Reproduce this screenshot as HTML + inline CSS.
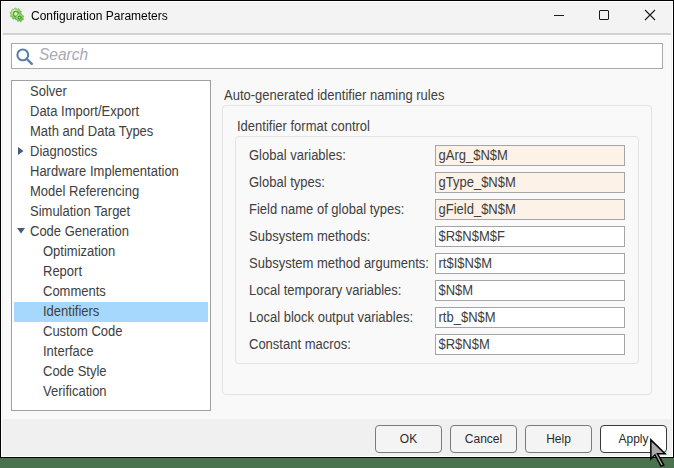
<!DOCTYPE html>
<html><head><meta charset="utf-8">
<style>
*{margin:0;padding:0;box-sizing:border-box}
html,body{width:674px;height:468px;overflow:hidden;background:#48734e}
body{position:relative;font-family:"Liberation Sans",sans-serif;font-size:13px;color:#262626}
.a{position:absolute}
#win{left:0;top:0;width:674px;height:458px;background:#000}
#frame{left:1px;top:1px;width:672px;height:456px;background:#fff}
#title{left:2px;top:2px;width:670px;height:31px;background:#f3f3f3}
#sep{left:2px;top:33px;width:670px;height:2px;background:#f0f0f0}
#sepl{left:3px;top:33px;width:668px;height:2px;background:#d2d2d2}
#content{left:2px;top:35px;width:670px;height:384px;background:#f0f0f0}
#cin{left:3px;top:35px;width:668px;height:384px;background:#f9f9f9}
#bar{left:2px;top:419px;width:670px;height:37px;background:#f0f0f0}
.ttl{left:31px;top:8px;font-size:12px;color:#000;will-change:transform;line-height:16px;white-space:nowrap}
#search{left:11px;top:43px;width:652px;height:26px;background:#fff;border:1px solid #a9a9a9}
.ph{left:39px;top:44px;font-size:15.5px;font-style:italic;color:#aaaab2;line-height:22px;transform:scaleY(1.1);transform-origin:0 16.4px}
#tree{left:11px;top:80px;width:200px;height:331px;background:#fff;border:1px solid #a0a0a0}
.row{position:absolute;left:3px;height:20px;line-height:20px;white-space:nowrap;transform:scaleY(1.075);transform-origin:0 14.5px;color:#404040}
.sel{left:14px;top:302px;width:194px;height:20px;background:#a6d8fd}
.grp1{left:222px;top:105px;width:430px;height:290px;border:1px solid #e3e3e3;border-radius:4px}
.grp2{left:235px;top:136px;width:404px;height:228px;border:1px solid #e3e3e3;border-radius:4px}
.lbl{position:absolute;left:249px;white-space:nowrap;line-height:20px;margin-top:1px;transform:scaleY(1.075);transform-origin:0 14.5px;color:#404040}
.fld{position:absolute;left:435px;width:190px;height:21px;border:1px solid #a5a5a5;background:#fff;padding-left:2.5px;line-height:19px;white-space:nowrap}
.fld.h{background:#fcf2e8}
.ft{display:inline-block;transform:scaleY(1.075);transform-origin:0 14px;color:#404040}
.btn{position:absolute;top:425px;width:67px;height:28px;border:1px solid #7a7a7a;border-radius:4px;background:#f4f4f4;text-align:center;line-height:26px;color:#2a2a2a;font-size:12px}
</style></head><body>
<div id="win" class="a"></div>
<div id="frame" class="a"></div>
<div id="title" class="a"></div>
<div id="sep" class="a"></div>
<div id="sepl" class="a"></div>
<div id="content" class="a"></div>
<div id="cin" class="a"></div>
<div id="bar" class="a"></div>

<!-- icon -->
<svg class="a" style="left:8px;top:6px" width="18" height="18" viewBox="0 0 18 18">
  <defs><radialGradient id="g1" cx="0.35" cy="0.3" r="0.75"><stop offset="0" stop-color="#d8f2bf"/><stop offset="0.5" stop-color="#9ad672"/><stop offset="1" stop-color="#5fae3e"/></radialGradient>
  <radialGradient id="g2" cx="0.4" cy="0.35" r="0.7"><stop offset="0" stop-color="#c4eaa4"/><stop offset="0.6" stop-color="#8ed064"/><stop offset="1" stop-color="#5aa83a"/></radialGradient></defs>
  <path d="M12.90 7.90 L13.77 8.46 L13.51 9.72 L12.49 9.89 L11.95 10.84 L12.33 11.80 L11.37 12.67 L10.45 12.20 L9.45 12.66 L9.19 13.66 L7.90 13.80 L7.43 12.88 L6.35 12.66 L5.56 13.31 L4.43 12.67 L4.59 11.65 L3.85 10.84 L2.82 10.90 L2.29 9.72 L3.02 8.99 L2.90 7.90 L2.03 7.34 L2.29 6.08 L3.31 5.91 L3.85 4.96 L3.47 4.00 L4.43 3.13 L5.35 3.60 L6.35 3.14 L6.61 2.14 L7.90 2.00 L8.37 2.92 L9.45 3.14 L10.24 2.49 L11.37 3.13 L11.21 4.15 L11.95 4.96 L12.98 4.90 L13.51 6.08 L12.78 6.81Z" fill="url(#g1)" stroke="#62ad42" stroke-width="0.5"/>
  <circle cx="7.9" cy="7.9" r="2.5" fill="none" stroke="#52a034" stroke-width="1.2"/>
  <circle cx="7.9" cy="7.9" r="1.5" fill="#e6f5da"/>
  <path d="M15.03 12.30 L15.59 12.91 L15.08 13.95 L14.25 13.88 L13.53 14.52 L13.49 15.35 L12.40 15.72 L11.86 15.09 L10.90 15.03 L10.29 15.59 L9.25 15.08 L9.32 14.25 L8.68 13.53 L7.85 13.49 L7.48 12.40 L8.11 11.86 L8.17 10.90 L7.61 10.29 L8.12 9.25 L8.95 9.32 L9.67 8.68 L9.71 7.85 L10.80 7.48 L11.34 8.11 L12.30 8.17 L12.91 7.61 L13.95 8.12 L13.88 8.95 L14.52 9.67 L15.35 9.71 L15.72 10.80 L15.09 11.34Z" fill="url(#g2)" stroke="#56a438" stroke-width="0.5"/>
  <circle cx="11.6" cy="11.6" r="1.5" fill="none" stroke="#46922c" stroke-width="1.1"/>
</svg>
<div class="a ttl">Configuration Parameters</div>

<!-- window controls -->
<div class="a" style="left:554px;top:15px;width:10px;height:1px;background:#1a1a1a"></div>
<div class="a" style="left:599px;top:10px;width:10px;height:10px;border:1px solid #1a1a1a;border-radius:1px"></div>
<svg class="a" style="left:644px;top:9px" width="12" height="12" viewBox="0 0 12 12"><path d="M1 1L11 11M11 1L1 11" stroke="#1a1a1a" stroke-width="1.1"/></svg>

<!-- search -->
<div id="search" class="a"></div>
<svg class="a" style="left:14px;top:46px" width="22" height="22" viewBox="0 0 22 22">
  <circle cx="8.8" cy="8.9" r="5.4" fill="none" stroke="#5b7fa9" stroke-width="2.1"/>
  <path d="M12.8 13L17.8 17.9" stroke="#5b7fa9" stroke-width="2.4" stroke-linecap="round"/>
</svg>
<div class="a ph">Search</div>

<!-- tree -->
<div id="tree" class="a"></div>
<div class="a sel"></div>
<div class="a" style="left:12px;top:81px;width:198px;height:329px">
  <div class="row" style="top:1px;left:18px">Solver</div>
  <div class="row" style="top:21px;left:18px">Data Import/Export</div>
  <div class="row" style="top:41px;left:18px">Math and Data Types</div>
  <div class="row" style="top:61px;left:18px">Diagnostics</div>
  <div class="row" style="top:81px;left:18px">Hardware Implementation</div>
  <div class="row" style="top:101px;left:18px">Model Referencing</div>
  <div class="row" style="top:121px;left:18px">Simulation Target</div>
  <div class="row" style="top:141px;left:18px">Code Generation</div>
  <div class="row" style="top:161px;left:31px">Optimization</div>
  <div class="row" style="top:181px;left:31px">Report</div>
  <div class="row" style="top:201px;left:31px">Comments</div>
  <div class="row" style="top:221px;left:31px">Identifiers</div>
  <div class="row" style="top:241px;left:31px">Custom Code</div>
  <div class="row" style="top:261px;left:31px">Interface</div>
  <div class="row" style="top:281px;left:31px">Code Style</div>
  <div class="row" style="top:301px;left:31px">Verification</div>
</div>
<svg class="a" style="left:16px;top:146px" width="10" height="10" viewBox="0 0 10 10"><path d="M2 1L7.5 5L2 9Z" fill="#455d78"/></svg>
<svg class="a" style="left:16px;top:226px" width="10" height="10" viewBox="0 0 10 10"><path d="M1 2L9 2L5 7.5Z" fill="#455d78"/></svg>

<!-- right -->
<div class="a" style="left:224px;top:85.5px;line-height:20px;white-space:nowrap;transform:scaleY(1.075);transform-origin:0 14.5px;color:#404040">Auto-generated identifier naming rules</div>
<div class="a grp1"></div>
<div class="a" style="left:237px;top:116.5px;line-height:20px;white-space:nowrap;transform:scaleY(1.075);transform-origin:0 14.5px;color:#404040">Identifier format control</div>
<div class="a grp2"></div>

<div class="lbl" style="top:145px">Global variables:</div>
<div class="lbl" style="top:172px">Global types:</div>
<div class="lbl" style="top:199px">Field name of global types:</div>
<div class="lbl" style="top:226px">Subsystem methods:</div>
<div class="lbl" style="top:253px">Subsystem method arguments:</div>
<div class="lbl" style="top:280px">Local temporary variables:</div>
<div class="lbl" style="top:307px">Local block output variables:</div>
<div class="lbl" style="top:334px">Constant macros:</div>

<div class="fld h" style="top:145px"><span class="ft">gArg_$N$M</span></div>
<div class="fld h" style="top:172px"><span class="ft">gType_$N$M</span></div>
<div class="fld h" style="top:199px"><span class="ft">gField_$N$M</span></div>
<div class="fld" style="top:226px"><span class="ft">$R$N$M$F</span></div>
<div class="fld" style="top:253px"><span class="ft">rt$I$N$M</span></div>
<div class="fld" style="top:280px"><span class="ft">$N$M</span></div>
<div class="fld" style="top:307px"><span class="ft">rtb_$N$M</span></div>
<div class="fld" style="top:334px"><span class="ft">$R$N$M</span></div>

<!-- buttons -->
<div class="btn" style="left:375px">OK</div>
<div class="btn" style="left:450px">Cancel</div>
<div class="btn" style="left:525px">Help</div>
<div class="btn" style="left:600px;background:#fff;border-color:#3a3a3a">Apply</div>

<!-- cursor -->
<svg class="a" style="left:648px;top:436px" width="26" height="32" viewBox="0 0 26 32">
  <polygon points="2.10,2.10 19.00,18.50 10.80,18.50 16.90,29.60 12.60,31.00 6.80,20.10 2.10,24.70" fill="#000"/>
  <polygon points="3.60,5.65 15.30,17.00 8.26,17.00 14.71,28.73 13.33,29.18 7.18,17.63 3.60,21.13" fill="#aaaaaa"/>
</svg>
</body></html>
